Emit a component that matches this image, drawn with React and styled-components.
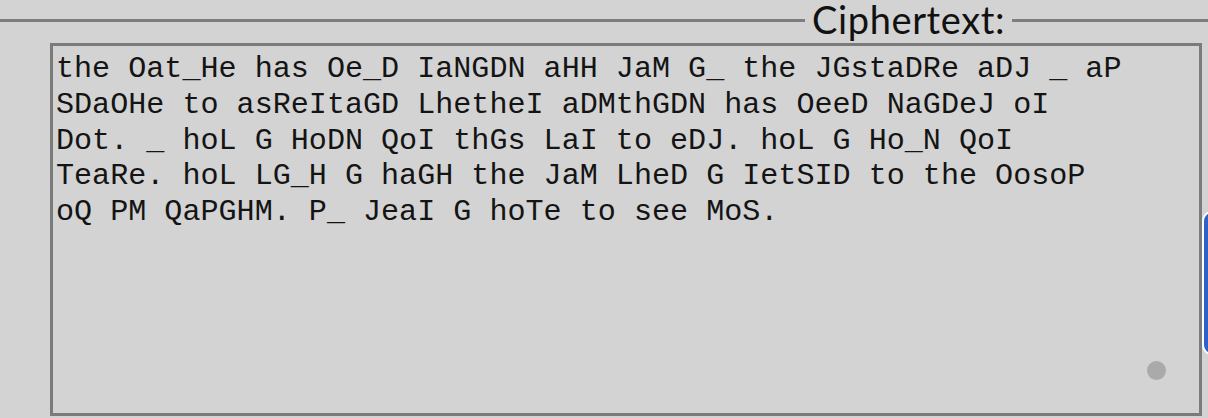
import React from 'react';
import styled, { createGlobalStyle } from 'styled-components';

const GlobalStyle = createGlobalStyle`
  html, body {
    margin: 0;
    padding: 0;
    background: #d3d3d3;
    overflow: hidden;
  }
`;

const Page = styled.div`
  width: 1208px;
  height: 418px;
  background: #d3d3d3;
`;

const TitleRow = styled.div`
  display: flex;
  align-items: flex-start;
  height: 38px;
`;

const Rule = styled.div`
  height: 3px;
  margin-top: 19px;
  background: #7e7e7e;
  flex: ${p => (p.$grow ? '1 1 auto' : `0 0 ${p.$width}px`)};
`;

const Legend = styled.span`
  padding: 0 7px;
  font-family: Lato, 'Noto Sans', sans-serif;
  font-weight: 400;
  font-size: 38px;
  letter-spacing: 0.6px;
  line-height: 40px;
  margin-top: -1px;
  color: #111;
`;

const Body = styled.div`
  display: flex;
  align-items: flex-start;
  margin-top: 5px;
  padding-left: 50px;
`;

const Box = styled.div`
  position: relative;
  flex: 0 0 1152px;
  height: 373px;
`;

const CipherArea = styled.textarea`
  box-sizing: border-box;
  display: block;
  width: 100%;
  height: 100%;
  margin: 0;
  padding: 6px 3px;
  border: 3px solid #7b7b7b;
  background: #d3d3d3;
  color: #141414;
  font-family: 'Liberation Mono', 'Courier New', monospace;
  font-size: 30.1px;
  line-height: 35.8px;
  white-space: pre;
  overflow: hidden;
  resize: none;
  outline: none;
`;

const Dot = styled.span`
  position: absolute;
  right: 36px;
  bottom: 36px;
  width: 19px;
  height: 19px;
  border-radius: 50%;
  background: #aaaaaa;
`;

const SideTab = styled.div`
  flex: 0 0 40px;
  box-sizing: border-box;
  margin-top: 168px;
  height: 144px;
  border: 2px solid #fff;
  border-radius: 10px;
  background: #2b63c9;
`;

const cipher = [
  'the Oat_He has Oe_D IaNGDN aHH JaM G_ the JGstaDRe aDJ _ aP',
  'SDaOHe to asReItaGD LhetheI aDMthGDN has OeeD NaGDeJ oI',
  'Dot. _ hoL G HoDN QoI thGs LaI to eDJ. hoL G Ho_N QoI',
  'TeaRe. hoL LG_H G haGH the JaM LheD G IetSID to the OosoP',
  'oQ PM QaPGHM. P_ JeaI G hoTe to see MoS.',
].join('\n');

export default function App() {
  return (
    <Page>
      <GlobalStyle />
      <TitleRow>
        <Rule $grow />
        <Legend>Ciphertext:</Legend>
        <Rule $width={196} />
      </TitleRow>
      <Body>
        <Box>
          <CipherArea value={cipher} readOnly spellCheck={false} />
          <Dot />
        </Box>
        <SideTab />
      </Body>
    </Page>
  );
}
